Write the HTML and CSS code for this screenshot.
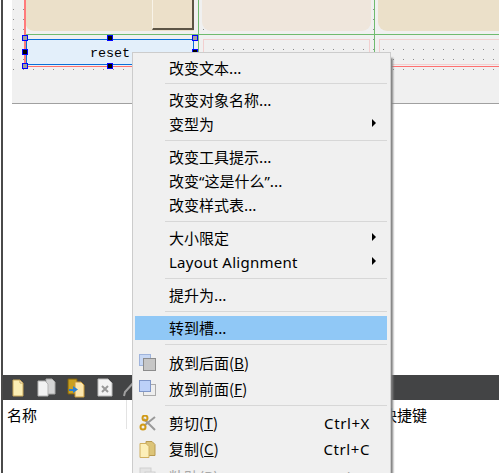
FILE: index.html
```html
<!DOCTYPE html>
<html lang="zh">
<head>
<meta charset="utf-8">
<title>Designer</title>
<link rel="stylesheet" href="styles.css">
</head>
<body>
<div class="page">
  <section class="designer">
    <div class="canvas">
      <div class="tile tile-a"><div class="tile-btn"></div></div>
      <div class="tile tile-b"></div>
      <div class="tile tile-c"></div>
      <div class="frame frame-b"></div>
      <div class="frame frame-c"></div>
      <div class="line green-h"></div>
      <div class="line green-v1"></div>
      <div class="line green-v2"></div>
      <div class="line red-v"></div>
      <div class="line red-h"></div>
      <div class="reset-btn">reset</div>
      <i class="handle grey h-l h-t"></i>
      <i class="handle h-m h-t"></i>
      <i class="handle grey h-r h-t"></i>
      <i class="handle h-l h-c"></i>
      <i class="handle h-r h-c"></i>
      <i class="handle grey h-l h-b"></i>
      <i class="handle h-m h-b"></i>
      <i class="handle grey h-r h-b"></i>
    </div>
  </section>
  <div class="spacer"></div>
  <div class="toolbar">
    <span class="tool"><svg width="12" height="18" viewBox="0 0 12 18"><path d="M1 1h7l3 3v13H1z" fill="#fbeeb4" stroke="#c9a85a"/><path d="M8 1v3h3z" fill="#fff" stroke="#c9a85a"/></svg></span>
    <span class="tool"><svg width="19" height="19" viewBox="0 0 19 19"><path d="M9 1h6l3 3v12H9z" fill="#d4d4d4" stroke="#a8a8a8"/><path d="M1 3h7l3 3v12H1z" fill="#f2f2f2" stroke="#b4b4b4"/></svg></span>
    <span class="tool"><svg width="18" height="20" viewBox="0 0 18 20"><path d="M1 1h9v15H1z" fill="#c9a020" stroke="#7c5f10"/><path d="M8 4h6l3 3v12H8z" fill="#fbe6ae" stroke="#c99a3a"/><path d="M2 11h4V8l5 3.500-5 3.500v-2H2z" fill="#2b7fd0"/></svg></span>
    <span class="tool"><svg width="16" height="19" viewBox="0 0 16 19"><path d="M1 1h10l4 4v13H1z" fill="#f3f3f3" stroke="#bbb"/><path d="M5 8l6 6M11 8l-6 6" stroke="#999" stroke-width="2"/></svg></span>
    <span class="tool"><svg width="24" height="18" viewBox="0 0 24 18"><path d="M2 17l1-4L12 3" fill="none" stroke="#a0a0a0" stroke-width="2"/></svg></span>
  </div>
  <div class="table-head">
    <div class="col col-name">名称</div>
    <div class="col col-mid"></div>
    <div class="col">快捷键</div>
  </div>
</div>

<nav class="menu">
  <div class="item">改变文本...</div>
  <div class="sep sep-short"></div>
  <div class="item">改变对象名称...</div>
  <div class="item arrow">变型为</div>
  <div class="sep"></div>
  <div class="item">改变工具提示...</div>
  <div class="item">改变<span class="q">“</span>这是什么<span class="q">”</span>...</div>
  <div class="item">改变样式表...</div>
  <div class="sep"></div>
  <div class="item arrow">大小限定</div>
  <div class="item arrow latin">Layout Alignment</div>
  <div class="sep"></div>
  <div class="item">提升为...</div>
  <div class="sep"></div>
  <div class="item active">转到槽...</div>
  <div class="sep sep-long"></div>
  <div class="item tall">
    <svg class="ico" width="17" height="17" viewBox="0 0 17 17"><rect x="0.500" y="0.500" width="11" height="11" fill="#c8d8f4" stroke="#9fb4dc"/><rect x="4.500" y="4.500" width="12" height="12" fill="#c6c6c6" stroke="#8c8c8c"/></svg>
    <span>放到后面(<u>B</u>)</span>
  </div>
  <div class="item tall">
    <svg class="ico" width="17" height="17" viewBox="0 0 17 17"><rect x="4.500" y="4.500" width="12" height="11" fill="#eee" stroke="#aaa"/><rect x="0.500" y="0.500" width="11" height="11" fill="#bcd0f8" stroke="#7f96c8"/></svg>
    <span>放到前面(<u>F</u>)</span>
  </div>
  <div class="sep sep-short"></div>
  <div class="item tall">
    <svg class="ico ico-low" width="17" height="17" viewBox="0 0 17 17"><path d="M5 4l11 11M16 2L6 10" stroke="#9a9a9a" stroke-width="2" fill="none"/><circle cx="4" cy="12" r="2.500" fill="none" stroke="#d09a18" stroke-width="2"/><circle cx="6" cy="3" r="2.500" fill="none" stroke="#d09a18" stroke-width="2"/></svg>
    <span>剪切(<u>T</u>)</span><span class="key">Ctrl+X</span>
  </div>
  <div class="item tall">
    <svg class="ico ico-low" width="17" height="17" viewBox="0 0 17 17"><path d="M7 0.500h6l3 3v11H7z" fill="#dcc478" stroke="#b89a50"/><path d="M1 2.500h6l3 3v11H1z" fill="#fcefb8" stroke="#d0b060"/></svg>
    <span>复制(<u>C</u>)</span><span class="key">Ctrl+C</span>
  </div>
  <div class="item tall off">
    <svg class="ico ico-low" width="17" height="17" viewBox="0 0 17 17"><rect x="1" y="1" width="11" height="14" fill="#ddd" stroke="#bbb"/><rect x="6" y="5" width="10" height="11" fill="#eee" stroke="#bbb"/></svg>
    <span>粘贴(<u>P</u>)</span><span class="key">Ctrl+V</span>
  </div>
</nav>
</body>
</html>
```

FILE: styles.css
```css
* { box-sizing: border-box; }
html, body { margin: 0; padding: 0; height: 100%; overflow: hidden; background: #fff; }
body { font-family: "Noto Sans CJK SC", "Noto Sans", sans-serif; font-size: 15px; color: #000; position: relative; }

.page {
  width: 499px; height: 473px; display: flex; flex-direction: column;
  border-left: 1px solid #fff; position: relative; overflow: hidden;
}
.page::before {
  content: ""; position: absolute; left: 0; top: 0; bottom: 0; width: 2px; background: #4a4a4a; z-index: 3;
}

.designer { height: 104px; padding-left: 11px; flex: none; }
.canvas {
  position: relative; height: 104px; overflow: hidden; background-color: #f0f0f0;
  border-bottom: 1px solid #a0a0a0;
}
.canvas::before {
  content: ""; position: absolute; left: 0; right: 0; top: 0; height: 71px;
  background-image: radial-gradient(circle at 0.5px 0.5px, #8c8c8c 0.5px, transparent 0.65px);
  background-size: 10px 10px; background-position: 1px 9px;
}

.tile { position: absolute; top: -20px; height: 51px; border-radius: 0 0 9px 9px; background: #ebe0c9; }
.tile-a { left: 13px; width: 169px; border-radius: 0 0 0 9px; }
.tile-b { left: 190px; width: 169px; background: #efe6dc; }
.tile-c { left: 366px; width: 131px; }
.tile-btn {
  position: absolute; right: 0; bottom: 1px; width: 42px; height: 40px;
  background: #ece0c9;
  border-style: solid; border-width: 1px 2px 2px 1px;
  border-color: #f8f3e8 #5c5445 #5c5445 #f8f3e8;
}

.frame { position: absolute; top: 39px; height: 26px; border: 1px solid #f2cfcf; }
.frame-b { left: 191px; width: 167px; }
.frame-c { left: 367px; width: 130px; }

.line { position: absolute; }
.green-h { left: 13px; right: 0; top: 34px; height: 1px; background: #6fbb6f; }
.green-v1 { left: 186px; top: 0; height: 66px; width: 1px; background: #6fbb6f; }
.green-v2 { left: 362px; top: 0; height: 66px; width: 1px; background: #6fbb6f; }
.red-v { left: 12px; top: 0; height: 67px; width: 2px; background: #ff7b7b; }
.red-h { left: 12px; right: 0; top: 66px; height: 1px; background: #ff7070; }

.reset-btn {
  position: absolute; left: 14px; top: 39px; width: 168px; height: 26px;
  background: #e3effa; border: 1px solid #0a6fd8; padding-top: 2px;
  font: 13.4px/24px "Liberation Mono", monospace; text-align: center;
}

.handle { position: absolute; width: 6px; height: 6px; background: #000; border: 1px solid #0000ff; }
.handle.grey { background: #a0a0a0; }
.h-l { left: 10px; }
.h-m { left: 95px; }
.h-r { left: 180px; }
.h-t { top: 35px; }
.h-c { top: 49px; }
.h-b { top: 63px; }

.spacer { flex: 1; }

.toolbar {
  height: 25px; flex: none; background: #434445; display: flex; align-items: center;
  padding-left: 2px;
}
.tool { flex: none; width: 29px; display: flex; justify-content: center; }

.table-head { height: 73px; flex: none; display: grid; grid-template-columns: 126px 255px 1fr; align-items: start; }
.col { padding-top: 4px; line-height: 22px; height: 29px; white-space: nowrap; }
.col-name { padding-left: 6px; border-right: 1px solid #e3e3e3; }

.menu {
  position: absolute; left: 132px; top: 52px; width: 259px; height: 440px;
  background: #f0f0f0; border: 1px solid #ccc; padding: 3px 2px 3px 2px;
  box-shadow: 3px 5px 2px -1px #808080;
}
.item {
  height: 24px; line-height: 24px; padding-left: 34px; padding-right: 17px; margin-right: 1px; position: relative;
  display: flex; align-items: center; white-space: nowrap;
}
.item.tall { height: 26px; }
.q { font-family: "Noto Sans", sans-serif; }
.latin { font-family: "Noto Sans", sans-serif; letter-spacing: 0.25px; }
.active { background: #90c8f6; }
.off { color: #a8a8a8; padding-top: 4px; }
.off .ico { opacity: .6; }
.ico { position: absolute; left: 4px; top: 4px; }
.ico-low { top: 5px; }
.key { margin-left: auto; font-family: "Noto Sans", sans-serif; letter-spacing: 0.6px; }
.arrow::after {
  content: ""; position: absolute; right: 11px; top: 7px;
  border-style: solid; border-width: 4px 0 4px 4px; border-color: transparent transparent transparent #000;
}
.sep { height: 9px; padding: 4px 1px 0 30px; }
.sep::before { content: ""; display: block; height: 1px; background: #d7d7d7; }
.sep-short { height: 8px; padding-top: 3px; }
.sep-long { height: 10px; }
```
